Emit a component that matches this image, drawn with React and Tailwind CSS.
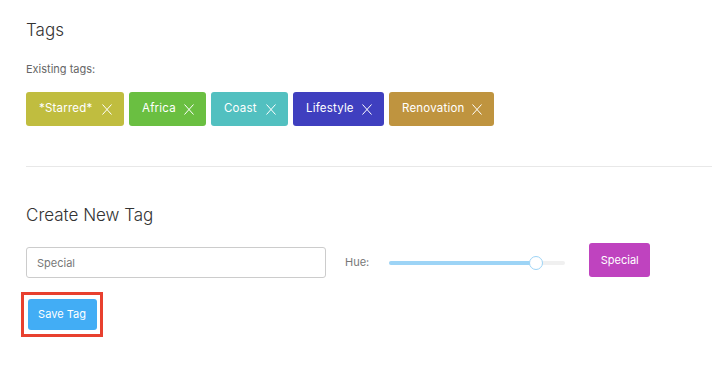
import { useState } from 'react'

const tags = [
  { name: '*Starred*', color: '#c0bd3f', w: 'w-[98px]' },
  { name: 'Africa', color: '#6abf41', w: 'w-[77px]' },
  { name: 'Coast', color: '#52c0c0', w: 'w-[77px]' },
  { name: 'Lifestyle', color: '#3f3fbf', w: 'w-[91px]' },
  { name: 'Renovation', color: '#bf943f', w: 'w-[105px]' },
]

function CloseIcon() {
  return (
    <svg width="10" height="11" viewBox="0 0 10 11" className="shrink-0">
      <path d="M0.5 0.5L9.5 10.5M9.5 0.5L0.5 10.5" stroke="white" strokeWidth="1" fill="none" />
    </svg>
  )
}

function Tag({ name, color, w }) {
  return (
    <div
      className={`${w} h-[34px] rounded-[3px] flex items-center justify-between pl-[13px] pr-[12px] text-white text-[11.5px] tracking-[0.2px]`}
      style={{ backgroundColor: color }}
    >
      <span>{name}</span>
      <CloseIcon />
    </div>
  )
}

export default function App() {
  const [name, setName] = useState('Special')

  return (
    <div className="min-h-screen w-[712px] bg-white pl-[26px] pt-[18px]" style={{ fontFamily: 'Inter, "Liberation Sans", sans-serif' }}>
      <h2 className="text-[17px] font-light text-[#333] leading-[24px]">Tags</h2>
      <p className="mt-[20px] text-[11px] text-[#666] leading-[14px]">Existing tags:</p>
      <div className="mt-[16px] flex gap-[5px]">
        {tags.map((t) => (
          <Tag key={t.name} {...t} />
        ))}
      </div>

      <div className="mt-[40px] h-px bg-[#e8e8e8]" />

      <h2 className="mt-[36px] text-[17px] font-light text-[#333] leading-[24px]">Create New Tag</h2>

      <div className="mt-[20px] flex items-center">
        <input
          value={name}
          onChange={(e) => setName(e.target.value)}
          className="w-[300px] h-[31px] border border-[#ccc] rounded-[3px] px-[10px] text-[11px] text-[#777] outline-none"
        />
        <span className="ml-[19px] text-[11px] text-[#777]">Hue:</span>
        <div className="ml-[20px] relative w-[176px] h-[14px] flex items-center">
          <div className="w-full h-[4px] rounded-full bg-[#f0f0f0]" />
          <div className="absolute left-0 w-[147px] h-[4px] rounded-full bg-[#9dd4f6]" />
          <div className="absolute left-[140px] w-[14px] h-[14px] rounded-full bg-white border border-[#9dd4f6]" />
        </div>
        <div className="ml-[24px] -mt-[5px] w-[61px] h-[34px] rounded-[3px] bg-[#bf43bf] text-white text-[11px] flex items-center justify-center">
          Special
        </div>
      </div>

      <div className="mt-[14px] -ml-[5px] w-[82px] h-[45px] border-[3px] border-[#e8402f] flex items-center justify-center">
        <button className="w-[69px] h-[31px] rounded-[3px] bg-[#42adf5] text-white text-[11px]">Save Tag</button>
      </div>
    </div>
  )
}
